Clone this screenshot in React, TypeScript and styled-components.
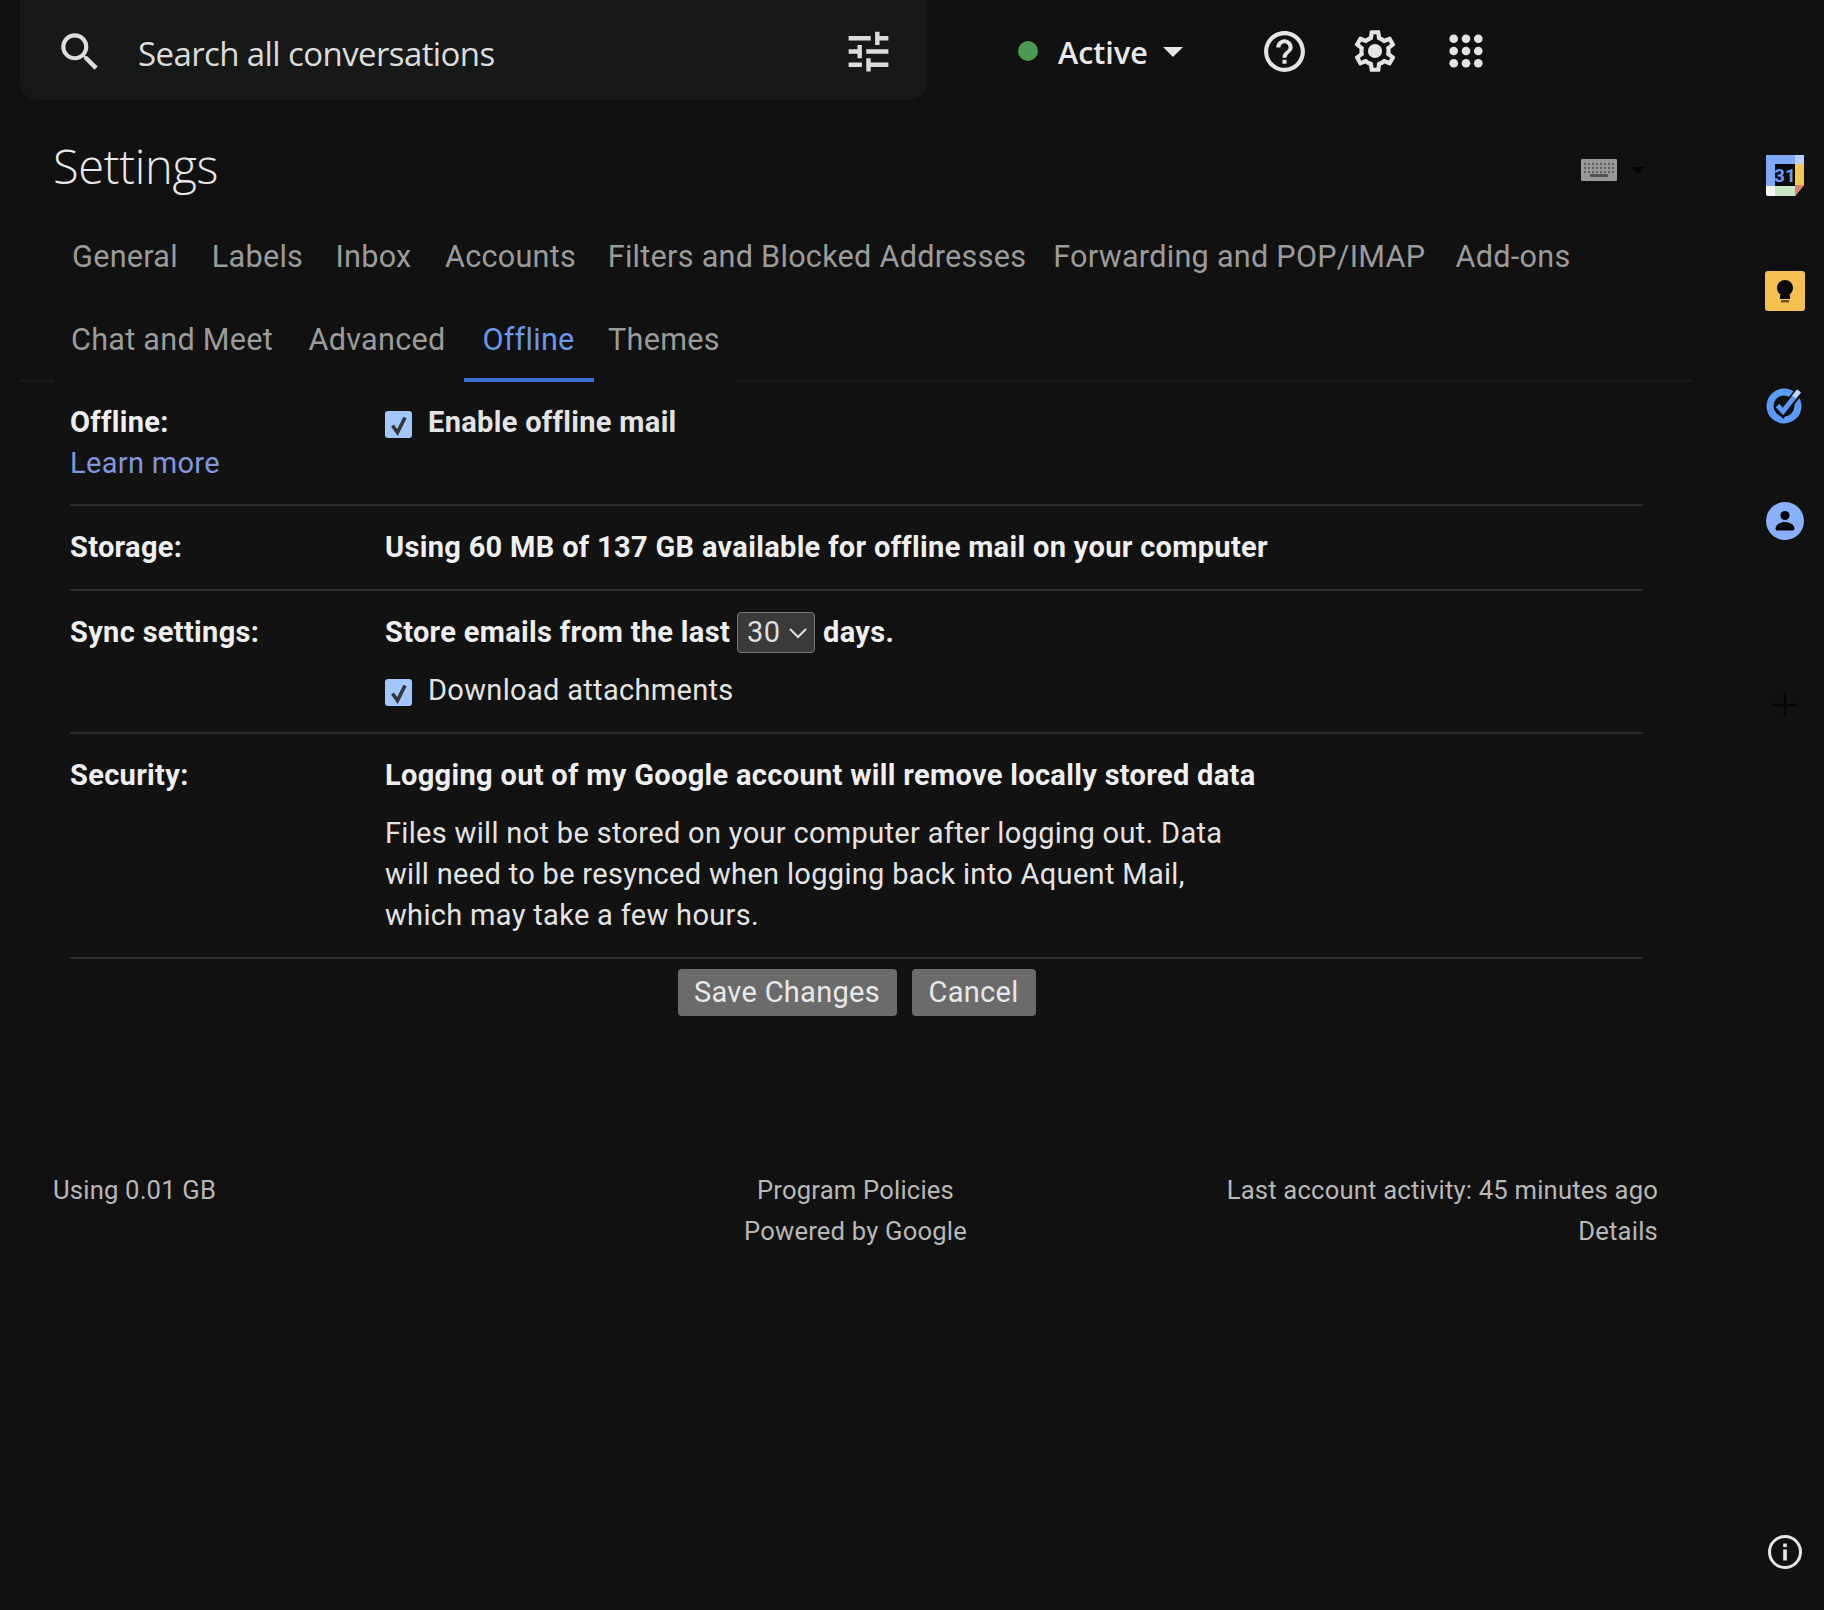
import React from "react";
import styled, { createGlobalStyle } from "styled-components";

const Global = createGlobalStyle`
  html, body { margin: 0; padding: 0; background: #111111; }
  body { font-family: Roboto, "Liberation Sans", sans-serif; color: #ececec; }
  * { box-sizing: border-box; }
`;

const Page = styled.div`
  display: flex;
  width: 1824px;
  height: 1610px;
  overflow: hidden;
  background: #111111;
`;
const Main = styled.main`
  display: flex;
  flex-direction: column;
  width: 1745px;
`;
const TopBar = styled.header`
  display: flex;
  align-items: center;
  height: 100px;
  padding-left: 20px;
`;
const SearchBox = styled.div`
  display: flex;
  align-items: center;
  width: 907px;
  height: 100px;
  padding: 3px 32px 0 35px;
  border-radius: 0 0 18px 18px;
  background: #171919;
`;
const SearchText = styled.span`
  flex: 1;
  margin-left: 33px;
  padding-top: 3px;
  font-family: "Open Sans", sans-serif;
  font-size: 33px;
  letter-spacing: -0.6px;
  color: #dcdcdc;
`;
const Status = styled.div`
  display: flex;
  align-items: center;
  margin-left: 91px;
  margin-top: 2px;
  width: 242px;
`;
const Dot = styled.span`
  width: 20px;
  height: 20px;
  border-radius: 50%;
  background: #4a9a52;
`;
const StatusText = styled.span`
  margin-left: 20px;
  padding-top: 2px;
  font-family: "Open Sans", sans-serif;
  font-size: 30.5px;
  font-weight: 600;
  letter-spacing: 0;
  color: #e8e8e8;
`;
const Caret = styled.span<{ $size: number; $color: string }>`
  width: 0;
  height: 0;
  border-left: ${(p) => p.$size}px solid transparent;
  border-right: ${(p) => p.$size}px solid transparent;
  border-top: ${(p) => p.$size}px solid ${(p) => p.$color};
`;
const StatusCaret = styled(Caret)`
  margin-left: 15px;
  margin-top: 2px;
`;
const IconGroup = styled.div`
  display: flex;
  align-items: center;
  gap: 41px;
  margin-top: 2px;
  color: #e4e4e4;
`;
const AppsSlot = styled.span`
  display: flex;
  margin-left: 8px;
`;
const TitleRow = styled.div`
  display: flex;
  align-items: center;
  justify-content: space-between;
  height: 118px;
  padding: 16px 100px 2px 53px;
`;
const Title = styled.h1`
  margin: 0;
  font-family: "Open Sans", sans-serif;
  font-size: 47px;
  font-weight: 300;
  letter-spacing: -0.3px;
  color: #e8e8e8;
`;
const KeyboardGroup = styled.div`
  display: flex;
  align-items: center;
  gap: 14px;
  margin-top: 8px;
`;
const Panel = styled.section`
  margin-left: 20px;
  width: 1672px;
  height: 844px;
  background: #121212;
`;
const TabBar = styled.nav`
  display: flex;
  flex-wrap: wrap;
  padding-left: 33.5px;
  padding-right: 60px;
  border-bottom: 2px solid #1b1b1b;
`;
const Tab = styled.a<{ $active?: boolean; $second?: boolean; $w: number }>`
  display: flex;
  align-items: center;
  justify-content: center;
  width: ${(p) => p.$w}px;
  height: 81px;
  font-size: 30.6px;
  letter-spacing: 0.27px;
  background: #111111;
  position: relative;
  top: ${(p) => (p.$second ? 2 : 0)}px;
  color: ${(p) => (p.$active ? "#6b97e8" : "#9b9b9b")};
  border-bottom: 4px solid ${(p) => (p.$active ? "#3a6fd8" : "transparent")};
`;
const Content = styled.div`
  margin: 0 49px 0 50px;
`;
const Row = styled.div`
  display: grid;
  grid-template-columns: 315px 1fr;
  padding: 21px 0;
  border-bottom: 2px solid #2b2b2b;
  font-size: 29px;
  line-height: 41px;
  letter-spacing: 0.32px;
  &:first-child {
    padding: 20px 0 20px;
  }
`;
const Label = styled.div`
  font-weight: 700;
  color: #efefef;
`;
const Link = styled.a`
  display: block;
  font-weight: 400;
  color: #8197dc;
`;
const Strong = styled.div`
  display: flex;
  align-items: center;
  font-weight: 700;
  color: #efefef;
`;
const Check = styled.label<{ $bold?: boolean }>`
  display: flex;
  align-items: center;
  align-self: start;
  gap: 16px;
  font-weight: ${(p) => (p.$bold ? 700 : 400)};
  color: #e4e4e4;
`;
const CheckBox = styled.span`
  display: flex;
  align-items: center;
  justify-content: center;
  flex: none;
  width: 27px;
  height: 27px;
  margin-top: 4px;
  border-radius: 3px;
  background: #a2c8fb;
  color: #33363a;
`;
const Sub = styled.div`
  margin-top: 17px;
`;
const Paragraph = styled.p`
  margin: 17px 0 0;
  font-weight: 400;
  color: #e4e4e4;
`;
const SelectBox = styled.span`
  display: inline-flex;
  align-items: center;
  justify-content: space-between;
  width: 78px;
  height: 41px;
  margin: 0 8px 0 7px;
  padding: 0 6px 0 9px;
  border: 1px solid #777;
  border-radius: 4px;
  background: #3a3a3a;
  font-weight: 400;
  color: #dedede;
`;
const Actions = styled.div`
  display: flex;
  justify-content: center;
  gap: 15px;
  padding-top: 10px;
`;
const Button = styled.button<{ $w: number }>`
  width: ${(p) => p.$w}px;
  height: 47px;
  padding: 0 0 2px;
  border: none;
  border-radius: 4px;
  background: #6b6b6b;
  font-family: Roboto, sans-serif;
  font-size: 29px;
  letter-spacing: 0.3px;
  color: #e8e8e8;
`;
const Footer = styled.footer`
  display: grid;
  grid-template-columns: 1fr 1fr 1fr;
  padding: 0 87px 0 53px;
  margin-top: 108px;
  font-size: 25.6px;
  line-height: 41px;
  letter-spacing: 0.2px;
  color: #b8b8b8;
`;
const FootCol = styled.div<{ $align: string }>`
  text-align: ${(p) => p.$align};
`;
const Side = styled.aside`
  display: flex;
  flex-direction: column;
  align-items: center;
  width: 79px;
  height: 1610px;
  padding-top: 155px;
`;
const SideItem = styled.div<{ $mt: number }>`
  display: flex;
  margin-top: ${(p) => p.$mt}px;
`;
const SideBottom = styled.div`
  display: flex;
  margin-top: auto;
  margin-bottom: 40px;
  color: #e6e6e6;
`;

const SearchIcon = () => (
  <svg width="50" height="50" viewBox="0 0 24 24" fill="#dedede">
    <path d="M15.5 14h-.79l-.28-.27A6.471 6.471 0 0 0 16 9.5 6.5 6.5 0 1 0 9.5 16c1.61 0 3.09-.59 4.23-1.57l.27.28v.79l5 4.99L20.49 19l-4.99-5zm-6 0C7.01 14 5 11.99 5 9.5S7.01 5 9.5 5 14 7.01 14 9.5 11.99 14 9.5 14z" />
  </svg>
);
const TuneIcon = () => (
  <svg width="53" height="53" viewBox="0 0 24 24" fill="#dcdcdc">
    <path d="M3 17v2h6v-2H3zM3 5v2h10V5H3zm10 16v-2h8v-2h-8v-2h-2v6h2zM7 9v2H3v2h4v2h2V9H7zm14 4v-2H11v2h10zm-6-4h2V7h4V5h-4V3h-2v6z" />
  </svg>
);
const HelpIcon = () => (
  <svg width="49" height="49" viewBox="0 0 24 24" fill="currentColor">
    <path d="M11 18h2v-2h-2v2zm1-16C6.48 2 2 6.48 2 12s4.48 10 10 10 10-4.48 10-10S17.52 2 12 2zm0 18c-4.41 0-8-3.59-8-8s3.59-8 8-8 8 3.59 8 8-3.59 8-8 8zm0-14c-2.21 0-4 1.79-4 4h2c0-1.1.9-2 2-2s2 .9 2 2c0 2-3 1.75-3 5h2c0-2.25 3-2.5 3-5 0-2.21-1.79-4-4-4z" />
  </svg>
);
const GearIcon = () => (
  <svg width="50" height="50" viewBox="0 0 24 24" fill="currentColor">
    <path d="M19.43 12.98c.04-.32.07-.64.07-.98 0-.34-.03-.66-.07-.98l2.11-1.65c.19-.15.24-.42.12-.64l-2-3.46c-.09-.16-.26-.25-.44-.25-.06 0-.12.01-.17.03l-2.49 1c-.52-.4-1.08-.73-1.69-.98l-.38-2.65C14.46 2.18 14.25 2 14 2h-4c-.25 0-.46.18-.49.42l-.38 2.65c-.61.25-1.17.59-1.69.98l-2.49-1c-.06-.02-.12-.03-.18-.03-.17 0-.34.09-.43.25l-2 3.46c-.13.22-.07.49.12.64l2.11 1.65c-.04.32-.07.65-.07.98 0 .33.03.66.07.98l-2.11 1.65c-.19.15-.24.42-.12.64l2 3.46c.09.16.26.25.44.25.06 0 .12-.01.17-.03l2.49-1c.52.4 1.08.73 1.69.98l.38 2.65c.03.24.24.42.49.42h4c.25 0 .46-.18.49-.42l.38-2.65c.61-.25 1.17-.59 1.69-.98l2.49 1c.06.02.12.03.18.03.17 0 .34-.09.43-.25l2-3.46c.12-.22.07-.49-.12-.64l-2.11-1.65zm-1.98-1.71c.04.31.05.52.05.73 0 .21-.02.43-.05.73l-.14 1.13.89.7 1.08.84-.7 1.21-1.27-.51-1.04-.42-.9.68c-.43.32-.84.56-1.25.73l-1.06.43-.16 1.13-.2 1.35h-1.4l-.19-1.35-.16-1.13-1.06-.43c-.43-.18-.83-.41-1.23-.71l-.91-.7-1.06.43-1.27.51-.7-1.21 1.08-.84.89-.7-.14-1.13c-.03-.31-.05-.54-.05-.74s.02-.43.05-.73l.14-1.13-.89-.7-1.08-.84.7-1.21 1.27.51 1.04.42.9-.68c.43-.32.84-.56 1.25-.73l1.06-.43.16-1.13.2-1.35h1.39l.19 1.35.16 1.13 1.06.43c.43.18.83.41 1.23.71l.91.7 1.06-.43 1.27-.51.7 1.21-1.07.85-.89.7.14 1.13z" />
    <circle cx="12" cy="12" r="3.4" />
  </svg>
);
const AppsIcon = () => (
  <svg width="34" height="34" viewBox="0 0 36 36" fill="currentColor">
    {[5, 18, 31].flatMap((y) =>
      [5, 18, 31].map((x) => <circle key={`${x}-${y}`} cx={x} cy={y} r="4.6" />)
    )}
  </svg>
);
const KeyboardIcon = () => (
  <svg width="36" height="22" viewBox="0 0 36 22">
    <rect width="36" height="22" rx="1" fill="#989898" />
    {[5, 9, 13].flatMap((y) =>
      [4, 8, 12, 16, 20, 24, 28, 32].map((x) => (
        <rect key={`${x}-${y}`} x={x - 1} y={y - 1} width="2" height="2" fill="#5f5f5f" />
      ))
    )}
    <rect x="9" y="15" width="18" height="3" fill="#4f4f4f" />
  </svg>
);
const CheckMark = () => (
  <svg width="24" height="24" viewBox="0 0 24 24" fill="none" stroke="currentColor" strokeWidth="3.6">
    <path d="M5.5 12.5l5 7 7.5-15" />
  </svg>
);
const Chevron = () => (
  <svg width="20" height="12" viewBox="0 0 20 12" fill="none" stroke="#dedede" strokeWidth="2">
    <path d="M2 2l8 8 8-8" />
  </svg>
);
const CalendarIcon = () => (
  <svg width="38" height="41" viewBox="0 0 38 41">
    <path d="M2 0h34a2 2 0 0 1 2 2v28l-9 11H2a2 2 0 0 1-2-2V2a2 2 0 0 1 2-2z" fill="#f4f8f1" />
    <rect x="0" y="0" width="30" height="9" fill="#7faaf8" />
    <rect x="0" y="0" width="9" height="31" fill="#7faaf8" />
    <rect x="29" y="9" width="9" height="21" fill="#f4c552" />
    <rect x="29" y="0" width="9" height="9" fill="#b9ccfb" />
    <rect x="9" y="31" width="20" height="10" fill="#c9e6c2" />
    <path d="M29 41v-11h9z" fill="#e87c6c" />
    <rect x="9" y="9" width="20" height="22" fill="#0b0b0b" />
    <text x="19" y="27" textAnchor="middle" fontFamily="Roboto, sans-serif" fontWeight="700" fontSize="19" fill="#6f9df0">31</text>
  </svg>
);
const KeepIcon = () => (
  <svg width="40" height="40" viewBox="0 0 40 40">
    <path d="M3 0h34a3 3 0 0 1 3 3v34a3 3 0 0 1-3 3H3a3 3 0 0 1-3-3V3a3 3 0 0 1 3-3z" fill="#f5c04f" />
    <circle cx="20" cy="17" r="8" fill="#080808" />
    <rect x="15" y="24" width="10" height="4" fill="#080808" />
    <rect x="16" y="29" width="8" height="2.5" fill="#6b5522" />
  </svg>
);
const TasksIcon = () => (
  <svg width="38" height="38" viewBox="0 0 38 38" fill="none">
    <circle cx="18" cy="20" r="14" stroke="#5a9bf8" strokeWidth="7" />
    <path d="M11 19l6 7 14-18" stroke="#0c0c0c" strokeWidth="9" />
    <path d="M11.5 19.5l5.5 6L33 5" stroke="#5a9bf8" strokeWidth="5" />
    <path d="M28 11l5-6" stroke="#c3d6fd" strokeWidth="5" />
  </svg>
);
const ContactsIcon = () => (
  <svg width="38" height="38" viewBox="0 0 38 38">
    <circle cx="19" cy="19" r="19" fill="#8ab0fb" />
    <circle cx="19" cy="13.5" r="4.6" fill="#080808" />
    <path d="M9.5 27c0-5 5.5-7 9.5-7s9.5 2 9.5 7a2 2 0 0 1-2 1.5h-15a2 2 0 0 1-2-1.5z" fill="#080808" />
  </svg>
);
const PlusIcon = () => (
  <svg width="24" height="24" viewBox="0 0 24 24" stroke="#040404" strokeWidth="2.5">
    <path d="M12 0v24M0 12h24" />
  </svg>
);
const InfoIcon = () => (
  <svg width="36" height="36" viewBox="0 0 36 36" fill="none">
    <circle cx="18" cy="18" r="15.5" stroke="currentColor" strokeWidth="3" />
    <rect x="16.2" y="15.5" width="3.6" height="11" fill="currentColor" />
    <rect x="16.2" y="9.5" width="3.6" height="3.6" fill="currentColor" />
  </svg>
);

const tabs = [
  { name: "General", w: 143 },
  { name: "Labels", w: 122 },
  { name: "Inbox", w: 110 },
  { name: "Accounts", w: 164 },
  { name: "Filters and Blocked Addresses", w: 449 },
  { name: "Forwarding and POP/IMAP", w: 395.5 },
  { name: "Add-ons", w: 152 },
  { name: "Chat and Meet", w: 237, second: true },
  { name: "Advanced", w: 173, second: true },
  { name: "Offline", w: 130, second: true, active: true },
  { name: "Themes", w: 141, second: true },
];

export default function App() {
  return (
    <Page>
      <Global />
      <Main>
        <TopBar>
          <SearchBox>
            <SearchIcon />
            <SearchText>Search all conversations</SearchText>
            <TuneIcon />
          </SearchBox>
          <Status>
            <Dot />
            <StatusText>Active</StatusText>
            <StatusCaret $size={10} $color="#e4e4e4" />
          </Status>
          <IconGroup>
            <HelpIcon />
            <GearIcon />
            <AppsSlot><AppsIcon /></AppsSlot>
          </IconGroup>
        </TopBar>
        <TitleRow>
          <Title>Settings</Title>
          <KeyboardGroup>
            <KeyboardIcon />
            <Caret $size={7} $color="#040404" />
          </KeyboardGroup>
        </TitleRow>
        <Panel>
          <TabBar>
            {tabs.map((t) => (
              <Tab key={t.name} $w={t.w} $active={t.active} $second={t.second}>{t.name}</Tab>
            ))}
          </TabBar>
          <Content>
            <Row>
              <Label>
                Offline:
                <Link>Learn more</Link>
              </Label>
              <Check $bold>
                <CheckBox><CheckMark /></CheckBox>
                <span>Enable offline mail</span>
              </Check>
            </Row>
            <Row>
              <Label>Storage:</Label>
              <Strong>Using 60 MB of 137 GB available for offline mail on your computer</Strong>
            </Row>
            <Row>
              <Label>Sync settings:</Label>
              <div>
                <Strong>
                  Store emails from the last
                  <SelectBox>30<Chevron /></SelectBox>
                  days.
                </Strong>
                <Sub>
                  <Check>
                    <CheckBox><CheckMark /></CheckBox>
                    <span>Download attachments</span>
                  </Check>
                </Sub>
              </div>
            </Row>
            <Row>
              <Label>Security:</Label>
              <div>
                <Strong>Logging out of my Google account will remove locally stored data</Strong>
                <Paragraph>
                  Files will not be stored on your computer after logging out. Data<br />
                  will need to be resynced when logging back into Aquent Mail,<br />
                  which may take a few hours.
                </Paragraph>
              </div>
            </Row>
            <Actions>
              <Button $w={219}>Save Changes</Button>
              <Button $w={124}>Cancel</Button>
            </Actions>
          </Content>
        </Panel>
        <Footer>
          <FootCol $align="left">Using 0.01 GB</FootCol>
          <FootCol $align="center">
            Program Policies<br />Powered by Google
          </FootCol>
          <FootCol $align="right">
            Last account activity: 45 minutes ago<br />Details
          </FootCol>
        </Footer>
      </Main>
      <Side>
        <SideItem $mt={0}><CalendarIcon /></SideItem>
        <SideItem $mt={75}><KeepIcon /></SideItem>
        <SideItem $mt={75}><TasksIcon /></SideItem>
        <SideItem $mt={78}><ContactsIcon /></SideItem>
        <SideItem $mt={153}><PlusIcon /></SideItem>
        <SideBottom><InfoIcon /></SideBottom>
      </Side>
    </Page>
  );
}
